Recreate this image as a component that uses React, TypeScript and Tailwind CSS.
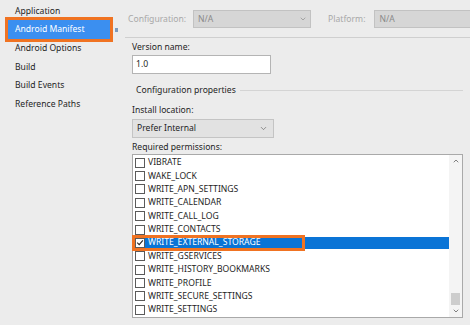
import { ChevronDown, ChevronUp } from "lucide-react";

const navItems = [
  "Application",
  "Android Manifest",
  "Android Options",
  "Build",
  "Build Events",
  "Reference Paths",
];

const permissions = [
  "VIBRATE",
  "WAKE_LOCK",
  "WRITE_APN_SETTINGS",
  "WRITE_CALENDAR",
  "WRITE_CALL_LOG",
  "WRITE_CONTACTS",
  "WRITE_EXTERNAL_STORAGE",
  "WRITE_GSERVICES",
  "WRITE_HISTORY_BOOKMARKS",
  "WRITE_PROFILE",
  "WRITE_SECURE_SETTINGS",
  "WRITE_SETTINGS",
];

function Checkbox({ checked }: { checked: boolean }) {
  return (
    <span className="flex h-[10px] w-[10px] shrink-0 items-center justify-center border border-[#5a5a5a] bg-white">
      {checked && (
        <svg viewBox="0 0 10 10" className="h-[9px] w-[9px]">
          <path d="M1.5 5.2 L4 7.6 L8.6 2.4" fill="none" stroke="#222" strokeWidth="1.4" />
        </svg>
      )}
    </span>
  );
}

export default function App() {
  return (
    <div className="flex h-[325px] w-[470px] overflow-hidden bg-[#ececec] font-['Noto_Sans',sans-serif] text-[8.6px] text-[#1e1e1e]">
      {/* Left nav */}
      <div className="flex w-[125px] shrink-0 flex-col pt-[2px]">
        {navItems.map((item) => {
          const active = item === "Android Manifest";
          return (
            <div key={item} className="flex h-[18.6px] items-center">
              {active ? (
                <div className="ml-[5px] flex items-center">
                  <div className="border-[3px] border-[#f07322]">
                    <div className="flex h-[19px] w-[102px] items-center bg-[#3b8ff0] pl-[7px] text-white">
                      {item}
                    </div>
                  </div>
                  <span className="ml-[2px] h-[4px] w-[3px] bg-[#7d9bbd]" />
                </div>
              ) : (
                <span className="pl-[15px]">{item}</span>
              )}
            </div>
          );
        })}
      </div>

      {/* Right panel */}
      <div className="flex min-w-0 flex-1 flex-col">
        {/* Top bar */}
        <div className="flex h-[38px] items-center border-b border-[#cfcfcf] pl-[3px] pt-[1px] text-[#a8a8a8]">
          <span>Configuration:</span>
          <div className="ml-[7px] flex h-[18px] w-[118px] items-center justify-between border border-[#c2c2c2] bg-[#d6d6d6] pl-[4px] pr-[3px] text-[#8a8a8a]">
            <span>N/A</span>
            <ChevronDown className="h-[8px] w-[8px]" strokeWidth={2} />
          </div>
          <span className="ml-[17px]">Platform:</span>
          <div className="ml-[9px] flex h-[18px] flex-1 items-center border border-r-0 border-[#c2c2c2] bg-[#d6d6d6] pl-[4px] text-[#8a8a8a]">
            N/A
          </div>
        </div>

        <div className="flex flex-col pl-[7px] pr-[7px]">
          <div className="mt-[3px] leading-[12px]">Version name:</div>
          <div className="mt-[2px] flex h-[19px] w-[139px] items-center border border-[#b4b4b4] bg-white pl-[3px]">
            1.0
          </div>

          <div className="mt-[10px] flex items-center gap-[4px] pl-[4px]">
            <span>Configuration properties</span>
            <span className="h-px flex-1 bg-[#d4d4d4]" />
          </div>

          <div className="mt-[7px] leading-[12px]">Install location:</div>
          <div className="mt-[3px] flex h-[19px] w-[142px] items-center justify-between border border-[#c4c4c4] bg-[#e2e2e2] pl-[4px] pr-[5px]">
            <span>Prefer Internal</span>
            <ChevronDown className="h-[9px] w-[9px] text-[#555]" strokeWidth={1.6} />
          </div>

          <div className="mt-[3px] leading-[12px]">Required permissions:</div>

          {/* Permissions list */}
          <div className="mt-[1px] flex h-[164px] w-[331px] border border-[#a9a9a9] bg-white">
            <div className="flex flex-1 flex-col pt-px">
              {permissions.map((p) => {
                const selected = p === "WRITE_EXTERNAL_STORAGE";
                return (
                  <div key={p} className="relative flex h-[13.4px] items-center">
                    <div
                      className={`flex h-[12px] flex-1 items-center gap-[3px] pl-[2px] ${
                        selected ? "bg-[#0a74d6] text-white" : ""
                      }`}
                    >
                      <Checkbox checked={selected} />
                      <span>{p}</span>
                    </div>
                    {selected && (
                      <span className="absolute left-[-1px] top-[-1px] h-[16px] w-[173px] border-[3px] border-[#f07322]" />
                    )}
                  </div>
                );
              })}
            </div>
            {/* Scrollbar */}
            <div className="flex w-[13px] flex-col items-center justify-between bg-[#f4f4f4] py-[2px]">
              <ChevronUp className="h-[8px] w-[8px] text-[#555]" strokeWidth={2.2} />
              <div className="flex flex-col items-center gap-[2px]">
                <div className="h-[12px] w-[9px] bg-[#cdcdcd]" />
                <ChevronDown className="h-[8px] w-[8px] text-[#555]" strokeWidth={2.2} />
              </div>
            </div>
          </div>
        </div>
      </div>
    </div>
  );
}
